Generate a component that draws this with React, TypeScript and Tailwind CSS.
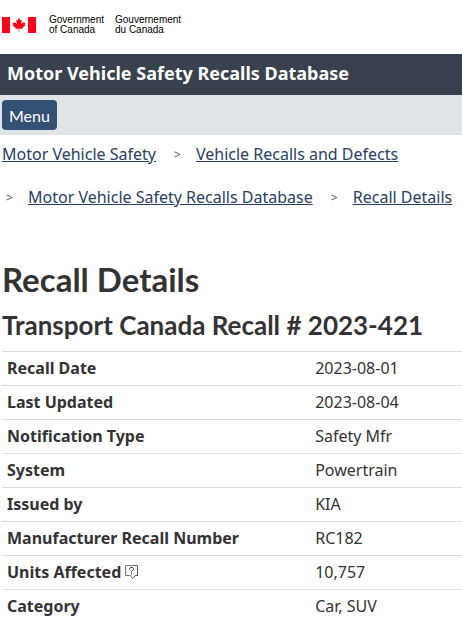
import React from "react";

const crumbs = [
  "Motor Vehicle Safety",
  "Vehicle Recalls and Defects",
  "Motor Vehicle Safety Recalls Database",
  "Recall Details",
];

const rows = [
  ["Recall Date", "2023-08-01"],
  ["Last Updated", "2023-08-04"],
  ["Notification Type", "Safety Mfr"],
  ["System", "Powertrain"],
  ["Issued by", "KIA"],
  ["Manufacturer Recall Number", "RC182"],
  ["Units Affected", "10,757"],
  ["Category", "Car, SUV"],
];

function Flag() {
  return (
    <svg className="h-4 w-[34px] shrink-0" viewBox="0 0 34 16" aria-hidden="true">
      <path fill="#ff0018" d="M0 0h8v16H0zM26 0h8v16h-8z" />
      <path
        fill="#ff0018"
        d="M17 1l-1.500 2.600-1.300-.7.7 4-1.900-1.900-.4 1-2-.4.7 2.100-.9.5 3.500 2.800-.4 1.100 3.200-.5-.1 3.200h.8l-.1-3.200 3.200.5-.4-1.100 3.500-2.800-.9-.5.7-2.100-2 .4-.4-1-1.900 1.900.7-4-1.300.7z"
      />
    </svg>
  );
}

function HelpIcon() {
  return (
    <svg className="size-[14px]" viewBox="0 0 14 14" fill="none" aria-hidden="true">
      <path d="M.5.5h12v10h-2l-3 3-2-3h-5z" fill="#f8f8f8" stroke="#777" />
      <path d="M12.500 1v9.500h-2l-3 3" stroke="#555" />
      <path d="M4.500 4.500v-1l1-1h2l1 1v1l-2 2v1M6.500 8.500v1" stroke="#333" />
    </svg>
  );
}

export default function App() {
  return (
    <div className="overflow-x-hidden bg-white font-['Noto_Sans',sans-serif] text-base text-[#333]">
      <header>
        <div className="flex h-[50px] items-center pl-0.5 font-['Liberation_Sans',Arial,sans-serif] text-[10px] leading-[10px] text-black">
          <Flag />
          <p className="ml-[13px] w-[66px]">
            Government
            <br />
            of Canada
          </p>
          <p lang="fr">
            Gouvernement
            <br />
            du Canada
          </p>
        </div>
        <div className="mt-1 bg-[#38414d] px-[7px] pt-[5px] pb-2 text-lg leading-7 font-bold text-white">
          Motor Vehicle Safety Recalls Database
        </div>
        <div className="bg-[#e1e4e7] px-0.5 py-[5px]">
          <button
            type="button"
            className="block rounded bg-[#335075] px-[7px] pt-1 pb-0.5 font-['Lato',sans-serif] text-base text-white"
          >
            Menu
          </button>
        </div>
        <nav aria-label="Breadcrumb" className="px-0.5">
          <ol className="flex flex-wrap gap-x-[14px]">
            {crumbs.map((crumb, index) => (
              <li key={crumb} className="flex h-[43px] items-start pt-[7px]">
                {index > 0 && (
                  <span className="w-[26px] pl-1 text-xs leading-[26px] text-[#555]" aria-hidden="true">
                    &gt;
                  </span>
                )}
                <a href="#" className="text-[#284162] underline">
                  {crumb}
                </a>
              </li>
            ))}
          </ol>
        </nav>
      </header>
      <main className="pt-10 pl-0.5">
        <h1 className="font-['Lato',sans-serif] text-[33px] leading-9 font-bold">Recall Details</h1>
        <h2 className="mt-3 font-['Lato',sans-serif] text-[26px] leading-8 font-bold">
          Transport Canada Recall # 2023-421
        </h2>
        <table className="mt-2.5 w-full border-collapse">
          <tbody>
            {rows.map(([label, value]) => (
              <tr key={label} className="h-[34px] border-t border-[#ddd]">
                <th scope="row" className="w-[67%] px-[5px] pb-0.5 text-left font-bold">
                  {label === "Units Affected" ? (
                    <span className="flex items-center gap-1">
                      {label}
                      <HelpIcon />
                    </span>
                  ) : (
                    label
                  )}
                </th>
                <td className="px-[5px] pb-0.5">{value}</td>
              </tr>
            ))}
          </tbody>
        </table>
      </main>
    </div>
  );
}
